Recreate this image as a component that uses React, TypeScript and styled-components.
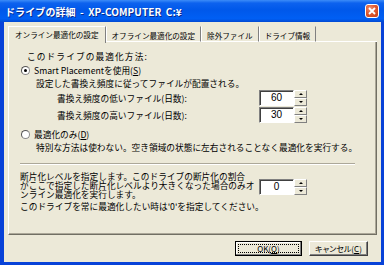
import styled, { createGlobalStyle } from 'styled-components';

const GlobalStyle = createGlobalStyle`
  html, body {
    margin: 0;
    padding: 0;
    background: #ffffff;
  }
  body {
    font-family: "Noto Sans CJK JP", "Liberation Sans", sans-serif;
    color: #000000;
  }
`;

const Window = styled.div`
  width: 384px;
  height: 265px;
  display: flex;
  flex-direction: column;
  background: #0842d8;
  overflow: hidden;
`;

const TitleBar = styled.div`
  height: 22px;
  flex: none;
  display: flex;
  align-items: center;
  justify-content: space-between;
  padding: 0 5px 0 5px;
  background: linear-gradient(
    #3c8cf8 0%,
    #0d62ee 14%,
    #0058ea 45%,
    #005ff4 85%,
    #0149d2 100%
  );
  color: #ffffff;
  font-size: 10px;
  font-weight: bold;
  white-space: nowrap;
  text-shadow: 1px 1px 0 #0a2a8a;
`;

const TitleText = styled.span`
  letter-spacing: 0.1px;
  word-spacing: 2px;
`;

const CloseButton = styled.div`
  width: 14px;
  height: 14px;
  box-sizing: border-box;
  border: 1px solid #ffffff;
  border-radius: 3px;
  background: radial-gradient(circle at 35% 30%, #f09070 0%, #e05a30 45%, #c63d16 100%);
  display: flex;
  align-items: center;
  justify-content: center;
`;

const Client = styled.div`
  flex: 1;
  margin: 0 3px 3px 4px;
  background: #ece9d8;
  display: flex;
  flex-direction: column;
  padding: 4px 4px 0 4px;
  font-size: 8.7px;
`;

const TabStrip = styled.div`
  display: flex;
  height: 16px;
  flex: none;
  position: relative;
  z-index: 1;
`;

const Tab = styled.div<{ $active?: boolean }>`
  height: ${({ $active }) => ($active ? '17px' : '16px')};
  box-sizing: border-box;
  padding: ${({ $active }) => ($active ? '1px 6px 0 6px' : '2px 5px 0 5px')};
  line-height: 13px;
  font-size: 7.6px;
  white-space: nowrap;
  background: #ece9d8;
  border-right: 1px solid #808080;
  border-left: 1px solid #ffffff;
  border-top: ${({ $active }) => ($active ? '1px solid #ffffff' : '1px solid transparent')};
  border-bottom: ${({ $active }) => ($active ? 'none' : '1px solid #ffffff')};
`;

const TabFill = styled.div`
  flex: 1;
  border-bottom: 1px solid #ffffff;
`;

const Panel = styled.div`
  height: 193px;
  flex: none;
  box-sizing: border-box;
  border-left: 1px solid #ffffff;
  border-right: 1px solid #716f64;
  border-bottom: 1px solid #716f64;
  box-shadow: inset -1px -1px 0 #aca899;
  padding: 0 0 0 12px;
  display: flex;
  flex-direction: column;
`;

const Heading = styled.div`
  margin: 8px 0 0 6px;
  height: 13px;
  line-height: 13px;
  white-space: nowrap;
  letter-spacing: 1.1px;
`;

const RadioRow = styled.div<{ $gap: number }>`
  margin-top: ${({ $gap }) => $gap}px;
  height: 13px;
  display: flex;
  align-items: center;
  gap: 4px;
  white-space: nowrap;
`;

const Radio = styled.span<{ $checked?: boolean }>`
  width: 9px;
  height: 9px;
  box-sizing: border-box;
  border-radius: 50%;
  border: 1px solid #8a8a8a;
  border-top-color: #555555;
  border-left-color: #555555;
  background: #ffffff;
  display: flex;
  align-items: center;
  justify-content: center;
  &::after {
    content: '';
    width: 3px;
    height: 3px;
    border-radius: 50%;
    background: ${({ $checked }) => ($checked ? '#000000' : 'transparent')};
  }
`;

const Desc = styled.div`
  margin-left: 15px;
  height: 13px;
  line-height: 13px;
  white-space: nowrap;
`;

const SpinRow = styled.div<{ $gap: number }>`
  margin: ${({ $gap }) => $gap}px 0 0 36px;
  height: 16px;
  display: flex;
  align-items: center;
`;

const SpinLabel = styled.div`
  width: 202px;
  white-space: nowrap;
`;

const Spin = styled.div`
  display: flex;
  height: 16px;
`;

const SpinField = styled.div`
  width: 35px;
  height: 16px;
  box-sizing: border-box;
  border: 1px solid;
  border-color: #808080 #ffffff #ffffff #808080;
  box-shadow: inset 1px 1px 0 #404040;
  background: #ffffff;
  text-align: center;
  line-height: 14px;
  font-family: "Liberation Sans", sans-serif;
  font-size: 10px;
`;

const SpinButtons = styled.div`
  width: 13px;
  display: flex;
  flex-direction: column;
`;

const SpinArrow = styled.div<{ $down?: boolean }>`
  height: 8px;
  box-sizing: border-box;
  border: 1px solid;
  border-color: #ffffff #808080 #808080 #ffffff;
  background: #ece9d8;
  display: flex;
  align-items: center;
  justify-content: center;
  &::after {
    content: '';
    border-left: 2px solid transparent;
    border-right: 2px solid transparent;
    ${({ $down }) =>
      $down ? 'border-top: 2px solid #000000;' : 'border-bottom: 2px solid #000000;'}
  }
`;

const Separator = styled.div`
  margin: 9px 0 0 -1px;
  width: 335px;
  height: 2px;
  border-top: 1px solid #aca899;
  border-bottom: 1px solid #ffffff;
  box-sizing: border-box;
`;

const ParaRow = styled.div`
  margin: 7px 0 0 -1px;
  display: flex;
  align-items: flex-start;
`;

const ParaText = styled.div`
  width: 239px;
  line-height: 9px;
  white-space: nowrap;
`;

const ParaSpin = styled.div`
  margin-top: 7px;
`;

const Note = styled.div`
  margin: 2px 0 0 -1px;
  height: 12px;
  line-height: 12px;
  white-space: nowrap;
`;

const ButtonRow = styled.div`
  margin-top: 6px;
  display: flex;
  justify-content: flex-end;
  gap: 7px;
  padding-right: 9px;
`;

const Button = styled.div<{ $default?: boolean; $width: number }>`
  width: ${({ $width }) => $width}px;
  height: 15px;
  box-sizing: border-box;
  border: 1px solid;
  border-color: ${({ $default }) =>
    $default ? '#000000' : '#ffffff #404040 #404040 #ffffff'};
  box-shadow: ${({ $default }) =>
    $default ? 'inset -1px -1px 0 #808080, inset 1px 1px 0 #ffffff' : 'inset -1px -1px 0 #808080'};
  background: #ece9d8;
  display: flex;
  align-items: center;
  justify-content: center;
  padding: 1px;
  font-size: 8px;
  font-feature-settings: "palt";
  white-space: nowrap;
`;

const FocusRing = styled.span`
  flex: 1;
  align-self: stretch;
  margin: 1px;
  border: 1px dotted #000000;
  display: flex;
  align-items: center;
  justify-content: center;
  line-height: 9px;
`;

const U = styled.span`
  text-decoration: underline;
`;

function SpinBox({ value }: { value: string }) {
  return (
    <Spin>
      <SpinField>{value}</SpinField>
      <SpinButtons>
        <SpinArrow />
        <SpinArrow $down />
      </SpinButtons>
    </Spin>
  );
}

export default function App() {
  return (
    <>
      <GlobalStyle />
      <Window>
        <TitleBar>
          <TitleText>ドライブの詳細 - XP-COMPUTER C:¥</TitleText>
          <CloseButton>
            <svg width="8" height="8" viewBox="0 0 8 8">
              <path d="M1 1 L7 7 M7 1 L1 7" stroke="#ffffff" strokeWidth="1.8" />
            </svg>
          </CloseButton>
        </TitleBar>
        <Client>
          <TabStrip>
            <Tab $active>オンライン最適化の設定</Tab>
            <Tab>オフライン最適化の設定</Tab>
            <Tab>除外ファイル</Tab>
            <Tab>ドライブ情報</Tab>
            <TabFill />
          </TabStrip>
          <Panel>
            <Heading>このドライブの最適化方法:</Heading>
            <RadioRow $gap={1}>
              <Radio $checked />
              <span>
                Smart Placementを使用(<U>S</U>)
              </span>
            </RadioRow>
            <Desc>設定した書換え頻度に従ってファイルが配置される。</Desc>
            <SpinRow $gap={0}>
              <SpinLabel>書換え頻度の低いファイル(日数):</SpinLabel>
              <SpinBox value="60" />
            </SpinRow>
            <SpinRow $gap={1}>
              <SpinLabel>書換え頻度の高いファイル(日数):</SpinLabel>
              <SpinBox value="30" />
            </SpinRow>
            <RadioRow $gap={5}>
              <Radio />
              <span>
                最適化のみ(<U>D</U>)
              </span>
            </RadioRow>
            <Desc>特別な方法は使わない。空き領域の状態に左右されることなく最適化を実行する。</Desc>
            <Separator />
            <ParaRow>
              <ParaText>
                断片化レベルを指定します。このドライブの断片化の割合
                <br />
                がここで指定した断片化レベルより大きくなった場合のみオ
                <br />
                ンライン最適化を実行します。
              </ParaText>
              <ParaSpin>
                <SpinBox value="0" />
              </ParaSpin>
            </ParaRow>
            <Note>このドライブを常に最適化したい時は'0'を指定してください。</Note>
          </Panel>
          <ButtonRow>
            <Button $default $width={67}>
              <FocusRing>
                OK(<U>O</U>)
              </FocusRing>
            </Button>
            <Button $width={59}>
              キャンセル(<U>C</U>)
            </Button>
          </ButtonRow>
        </Client>
      </Window>
    </>
  );
}
